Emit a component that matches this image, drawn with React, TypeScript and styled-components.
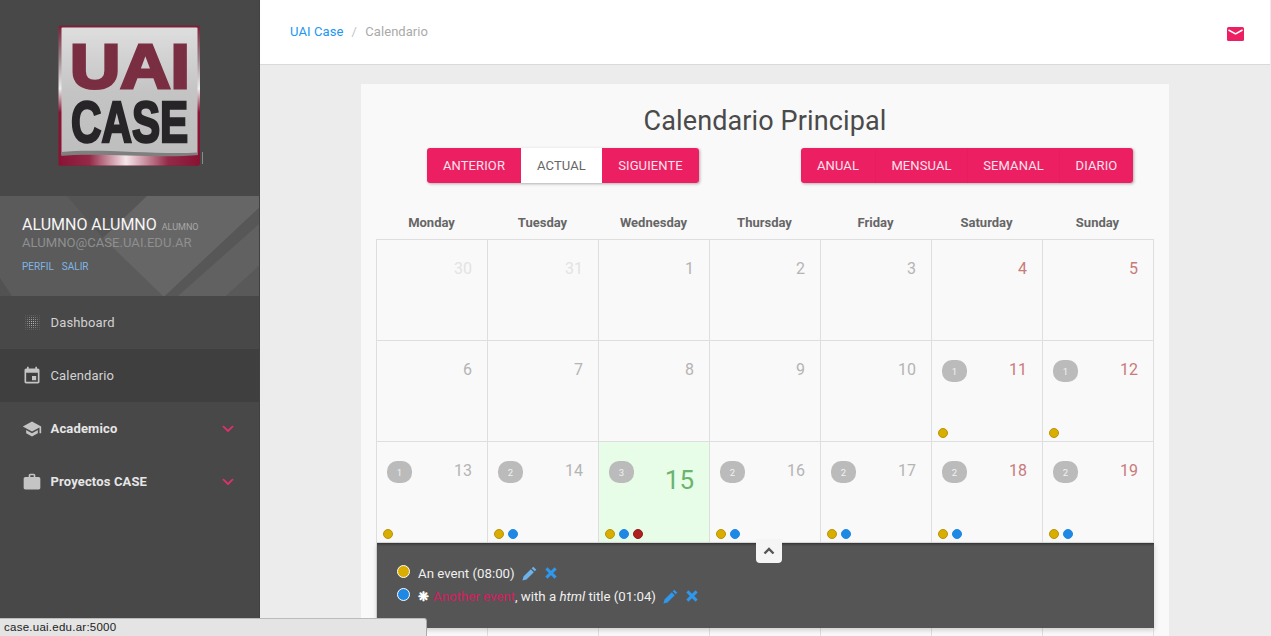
import React from "react";
import styled, { createGlobalStyle } from "styled-components";

const Global = createGlobalStyle`
  html, body { margin: 0; padding: 0; height: 100%; overflow: hidden; background: #ececec; }
  * { box-sizing: border-box; }
  body { font-family: Roboto, "Liberation Sans", sans-serif; }
`;

const Shell = styled.div`
  position: relative; display: flex; height: 636px; overflow: hidden;
`;
const Sidebar = styled.aside`
  flex: 0 0 260px; background: #484848; display: flex; flex-direction: column; border-right: 1px solid #414141;
`;
const LogoWrap = styled.div`
  height: 196px; padding: 25px 0 0 58px;
`;
const UserPanel = styled.div`
  position: relative; height: 100px; background: #5b5b5b; padding: 19px 22px 0; overflow: hidden;
`;
const PanelArt = styled.svg`
  position: absolute; inset: 0; width: 259px; height: 100px;
`;
const UserName = styled.div`
  position: relative; color: #f6f6f6; font-size: 16px; line-height: 20px; white-space: nowrap;
`;
const UserRole = styled.span`
  color: #a8a8a8; font-size: 9px; line-height: 9px; margin-left: 1px;
`;
const UserMail = styled.div`
  position: relative; color: #8f8f8f; font-size: 13.1px; line-height: 18px; margin-top: -1px;
`;
const UserLinks = styled.div`
  position: relative; display: flex; gap: 8px; margin-top: 8px; color: #7fb6e4; font-size: 10px; line-height: 14px;
`;
const NavItem = styled.div<{ $active?: boolean; $bold?: boolean }>`
  height: 53px; display: flex; align-items: center; padding: 0 24px 0 22px;
  background: ${p => (p.$active ? "#3f3f3f" : "transparent")};
  color: ${p => (p.$bold ? "#e6e6e6" : "#d2d2d2")};
  font-size: 13px; font-weight: ${p => (p.$bold ? 700 : 400)};
`;
const NavIcon = styled.span`
  width: 20px; height: 20px; margin-right: 8.5px; color: #c4c4c4; display: flex; align-items: center; justify-content: center;
  svg { display: block; }
`;
const NavLabel = styled.span`
  flex: 1; letter-spacing: .15px;
`;
const Main = styled.main`
  flex: 1; min-width: 0; display: flex; flex-direction: column; margin-right: 1px;
`;
const TopBar = styled.header`
  flex: 0 0 65px; background: #fff; border-bottom: 1px solid #d9d9d9; display: flex; align-items: flex-start;
  padding: 24px 26px 0 30px; font-size: 13px; line-height: 15px;
`;
const Crumb = styled.span`
  color: #2196f3; letter-spacing: .1px;
`;
const CrumbSep = styled.span`
  color: #c4c4c4; margin: 0 8.5px 0 8px;
`;
const CrumbCurrent = styled.span`
  color: #aaa; letter-spacing: .05px; flex: 1;
`;
const MailIcon = styled.svg`
  display: block; margin-top: 3px;
`;
const Content = styled.div`
  flex: 1; min-height: 0; padding: 19px 0 0 101px; overflow: hidden;
`;
const Card = styled.section`
  width: 808px; background: #f9f9f9; padding: 21px 15px 0;
`;
const Title = styled.h1`
  margin: 0; text-align: center; color: #4a4a4a; font-weight: 400; font-size: 27px; line-height: 32px; letter-spacing: .12px;
`;
const Toolbar = styled.div`
  display: flex; gap: 102px; padding-left: 51px; margin-top: 11px;
`;
const ButtonGroup = styled.div`
  display: flex; border-radius: 3px; overflow: hidden; box-shadow: 1px 1px 3px rgba(0,0,0,.3);
`;
const Btn = styled.div<{ $active?: boolean; $width: number; $sep?: boolean }>`
  width: ${p => p.$width}px; height: 35px; display: flex; align-items: center; justify-content: center;
  background: ${p => (p.$active ? "#fff" : "#ec1f63")};
  color: ${p => (p.$active ? "#666" : "#fbe3eb")};
  font-size: 13px; letter-spacing: .1px;
  border-left: ${p => (p.$sep ? "1px solid #e51e60" : "none")};
`;
const WeekRow = styled.div`
  display: grid; grid-template-columns: repeat(7, 111px); margin-top: 31px; height: 25px;
`;
const WeekDay = styled.div`
  text-align: center; color: #666; font-size: 13px; font-weight: 700; line-height: 18px;
`;
const Grid = styled.div`
  width: 778px; border-top: 1px solid #dedede; border-left: 1px solid #dedede;
`;
const Week = styled.div`
  display: grid; grid-template-columns: repeat(7, 111px); margin-left: -1px;
`;
const Cell = styled.div<{ $today?: boolean }>`
  height: 101px; padding: 19px 15px 2px 6px; display: flex; flex-direction: column;
  border-left: 1px solid #dedede; border-right: 1px solid #dedede; margin-right: -1px; border-bottom: 1px solid #dedede;
  background: ${p => (p.$today ? "#e8fde7" : "#f9f9f9")};
`;
const CellTop = styled.div`
  display: flex; justify-content: space-between; align-items: flex-start; padding-left: 4px; flex: 1;
`;
const Badge = styled.span`
  width: 25px; height: 22px; border-radius: 10px; background: #bbb; color: #f2f2f2; font-size: 9.5px;
  display: flex; align-items: center; justify-content: center;
`;
const DayNum = styled.span<{ $tone: string; $today?: boolean }>`
  margin-left: auto; line-height: 20px;
  font-size: ${p => (p.$today ? "26px" : "16px")};
  ${p => p.$today && "margin-top: 5px; line-height: 28px;"}
  color: ${p => p.$tone};
`;
const Dots = styled.div`
  display: flex; gap: 4px; height: 10px; margin-bottom: 1px;
`;
const Dot = styled.span<{ $color: string; $edge: string }>`
  width: 10px; height: 10px; border-radius: 50%; background: ${p => p.$color}; border: 1px solid ${p => p.$edge};
`;
const Slide = styled.div`
  position: relative; z-index: 1; height: 85px; background: #555; color: #f0f0f0; padding: 19px 20px 0;
  box-shadow: inset 0 3px 3px -2px rgba(0,0,0,.5), 0 2px 5px rgba(0,0,0,.18); font-size: 13.25px;
`;
const Collapse = styled.div`
  position: absolute; left: 379px; top: -4px; width: 26px; height: 24px; background: #f5f5f5; border-radius: 0 0 4px 4px;
  display: flex; align-items: center; justify-content: center; color: #555;
`;
const EventRow = styled.div`
  display: flex; align-items: center; height: 23px; line-height: 23px; white-space: nowrap;
`;
const EventDot = styled.span<{ $color: string }>`
  width: 13px; height: 13px; border-radius: 50%; background: ${p => p.$color}; border: 1px solid #fff; margin-right: 8px; margin-top: -4px; flex: none;
`;
const Pink = styled.span`
  color: #d81b60;
`;
const Tool = styled.svg<{ $gap: number }>`
  margin-left: ${p => p.$gap}px; flex: none; display: block; margin-top: -1px; color: #2e97ee;
`;
const Star = styled.span`
  font-size: 13px; margin-right: 4px; color: #fff; font-weight: 700;
`;
const StatusBar = styled.div`
  position: absolute; z-index: 2; left: 0; bottom: 0; width: 427px; height: 18px; background: #e4e4e4; color: #222;
  border-top: 1px solid #bbb; border-right: 1px solid #aaa; border-radius: 0 3px 0 0;
  font-size: 11.5px; line-height: 17px; padding-left: 4px; letter-spacing: .25px; font-family: "Liberation Sans", sans-serif;
`;

const Logo = () => (
  <svg width="148" height="142" viewBox="0 0 148 142">
    <defs>
      <linearGradient id="face" x1="0" y1="0" x2="0" y2="1">
        <stop offset="0" stopColor="#dedede" />
        <stop offset=".5" stopColor="#c4c4c4" />
        <stop offset="1" stopColor="#bebebe" />
      </linearGradient>
      <linearGradient id="band" x1="0" y1="0" x2="1" y2="0">
        <stop offset="0" stopColor="#8a1233" />
        <stop offset=".22" stopColor="#932a48" />
        <stop offset=".48" stopColor="#f5e6ea" />
        <stop offset=".78" stopColor="#932a48" />
        <stop offset="1" stopColor="#8a1233" />
      </linearGradient>
      <linearGradient id="edge" x1="0" y1="0" x2="0" y2="1">
        <stop offset="0" stopColor="#7a1f38" />
        <stop offset=".25" stopColor="#a08a90" />
        <stop offset=".45" stopColor="#eeeeee" />
        <stop offset=".62" stopColor="#8a1233" />
        <stop offset="1" stopColor="#8a1233" />
      </linearGradient>
    </defs>
    <rect x="0.5" y="0.5" width="141.5" height="140" rx="2" fill="url(#edge)" />
    <rect x="3.5" y="2.5" width="136" height="128" rx="1" fill="url(#face)" />
    <path d="M3.5 127 C40 123 100 130 139.5 127.5 V132 H3.5 Z" fill="#7f7f7f" />
    <path d="M2 131 C40 127 100 134 141 130 V140.5 H0.5 Z" fill="url(#band)" />
    <text transform="translate(12 62.5) scale(1.106 1)" fontFamily="Liberation Sans" fontWeight="700" fontSize="63" fill="#7a2e42" stroke="#7a2e42" strokeWidth="3">UAI</text>
    <text transform="translate(13 117) scale(.727 1)" fontFamily="Liberation Sans" fontWeight="700" fontSize="58" fill="#272527" stroke="#272527" strokeWidth="2.5">CASE</text>
    <rect x="144" y="127" width="1" height="12" fill="#8a8a8a" />
  </svg>
);

const PanelDecor = () => (
  <PanelArt viewBox="0 0 259 100">
    <polygon points="67,0 147,0 103,42" fill="#555" />
    <polygon points="147,0 259,0 259,12 165,100 163,100 103,42" fill="#666" />
    <polygon points="259,12 165,100 178,100 259,28" fill="#575757" />
    <polygon points="259,28 178,100 226,100 259,70" fill="#616161" />
    <polygon points="259,70 226,100 259,100" fill="#595959" />
    <polygon points="0,82 12,100 0,100" fill="#525252" />
  </PanelArt>
);

const DotsIcon = () => {
  const dots: React.ReactElement[] = [];
  for (let x = 0; x < 8; x++)
    for (let y = 0; y < 8; y++) {
      const d = Math.hypot(x - 3.5, y - 3.5);
      dots.push(<rect key={`${x}-${y}`} x={x * 2} y={y * 2} width="1" height="1" fill="currentColor" opacity={Math.max(0.12, 1.1 - d / 4)} />);
    }
  return <svg width="15" height="15" viewBox="0 0 15 15">{dots}</svg>;
};
const Mat = ({ d, size = 20 }: { d: string; size?: number }) => (
  <svg width={size} height={size} viewBox="0 0 24 24" fill="currentColor"><path d={d} /></svg>
);
const Chevron = () => (
  <svg width="14" height="8" viewBox="0 0 14 8" fill="none" stroke="#e0306e" strokeWidth="1.8"><path d="M2 1.2 L7 6 L12 1.2" /></svg>
);
const Pencil = ({ color }: { color: string }) => (
  <Tool $gap={7} width="15" height="15" viewBox="0 0 14 14" style={{ color }}>
    <path fill="currentColor" d="M10.6.6l2.8 2.8-1.6 1.6L9 2.2zM8.2 3l2.8 2.8-6.8 6.8L.4 13.6l1-3.8z" />
  </Tool>
);
const Cross = () => (
  <Tool $gap={8} width="12" height="12" viewBox="0 0 12 12">
    <path stroke="currentColor" strokeWidth="3" d="M1.4 1.4l9.2 9.2M10.6 1.4l-9.2 9.2" />
  </Tool>
);

const Y: [string, string] = ["#d9ae00", "#b8930a"];
const B: [string, string] = ["#1e88e5", "#1e88e5"];
const R: [string, string] = ["#ad2121", "#8f1c1c"];
type CellData = { n: number; badge?: number; dots?: [string, string][]; weekend?: boolean; muted?: boolean; today?: boolean };
const weeks: CellData[][] = [
  [{ n: 30, muted: true }, { n: 31, muted: true }, { n: 1 }, { n: 2 }, { n: 3 }, { n: 4, weekend: true }, { n: 5, weekend: true }],
  [{ n: 6 }, { n: 7 }, { n: 8 }, { n: 9 }, { n: 10 }, { n: 11, weekend: true, badge: 1, dots: [Y] }, { n: 12, weekend: true, badge: 1, dots: [Y] }],
  [
    { n: 13, badge: 1, dots: [Y] }, { n: 14, badge: 2, dots: [Y, B] }, { n: 15, badge: 3, dots: [Y, B, R], today: true },
    { n: 16, badge: 2, dots: [Y, B] }, { n: 17, badge: 2, dots: [Y, B] }, { n: 18, badge: 2, dots: [Y, B], weekend: true }, { n: 19, badge: 2, dots: [Y, B], weekend: true },
  ],
];
const lastRowCells = [0, 1, 2, 3, 4, 5, 6];

const tone = (c: CellData) => (c.today ? "#6ab46e" : c.muted ? "#e3e3e3" : c.weekend ? "#c97a7a" : "#b4b4b4");
const DayCell = ({ c }: { c: CellData }) => (
  <Cell $today={c.today}>
    <CellTop>
      {c.badge ? <Badge>{c.badge}</Badge> : null}
      <DayNum $tone={tone(c)} $today={c.today}>{c.n}</DayNum>
    </CellTop>
    <Dots>{c.dots?.map((d, i) => <Dot key={i} $color={d[0]} $edge={d[1]} />)}</Dots>
  </Cell>
);

export default function App() {
  return (
    <Shell>
      <Global />
      <Sidebar>
        <LogoWrap><Logo /></LogoWrap>
        <UserPanel>
          <PanelDecor />
          <UserName>ALUMNO ALUMNO <UserRole>ALUMNO</UserRole></UserName>
          <UserMail>ALUMNO@CASE.UAI.EDU.AR</UserMail>
          <UserLinks><span>PERFIL</span><span>SALIR</span></UserLinks>
        </UserPanel>
        <NavItem><NavIcon><DotsIcon /></NavIcon><NavLabel>Dashboard</NavLabel></NavItem>
        <NavItem $active><NavIcon><Mat d="M17 12h-5v5h5v-5zM16 1v2H8V1H6v2H5c-1.11 0-1.99.9-1.99 2L3 19c0 1.1.89 2 2 2h14c1.1 0 2-.9 2-2V5c0-1.1-.9-2-2-2h-1V1h-2zm3 18H5V8h14v11z" /></NavIcon><NavLabel>Calendario</NavLabel></NavItem>
        <NavItem $bold><NavIcon><Mat d="M5 13.18v4L12 21l7-3.82v-4L12 17l-7-3.82zM12 3L1 9l11 6 9-4.91V17h2V9L12 3z" /></NavIcon><NavLabel>Academico</NavLabel><Chevron /></NavItem>
        <NavItem $bold><NavIcon><Mat d="M20 6h-4V4c0-1.11-.89-2-2-2h-4c-1.11 0-2 .89-2 2v2H4c-1.11 0-1.99.89-1.99 2L2 19c0 1.11.89 2 2 2h16c1.11 0 2-.89 2-2V8c0-1.11-.89-2-2-2zm-6 0h-4V4h4v2z" /></NavIcon><NavLabel>Proyectos CASE</NavLabel><Chevron /></NavItem>
      </Sidebar>
      <Main>
        <TopBar>
          <Crumb>UAI Case</Crumb><CrumbSep>/</CrumbSep><CrumbCurrent>Calendario</CrumbCurrent>
          <MailIcon width="17" height="14" viewBox="0 0 17 14">
            <rect width="17" height="14" rx="1.5" fill="#ec1f63" />
            <path d="M1.5 3 L8.5 7 L15.5 3" fill="none" stroke="#fff" strokeWidth="1.5" />
          </MailIcon>
        </TopBar>
        <Content>
          <Card>
            <Title>Calendario Principal</Title>
            <Toolbar>
              <ButtonGroup>
                <Btn $width={94}>ANTERIOR</Btn>
                <Btn $width={81} $active>ACTUAL</Btn>
                <Btn $width={97}>SIGUIENTE</Btn>
              </ButtonGroup>
              <ButtonGroup>
                <Btn $width={74}>ANUAL</Btn>
                <Btn $width={92} $sep>MENSUAL</Btn>
                <Btn $width={92} $sep>SEMANAL</Btn>
                <Btn $width={74} $sep>DIARIO</Btn>
              </ButtonGroup>
            </Toolbar>
            <WeekRow>
              {["Monday", "Tuesday", "Wednesday", "Thursday", "Friday", "Saturday", "Sunday"].map(d => <WeekDay key={d}>{d}</WeekDay>)}
            </WeekRow>
            <Grid>
              {weeks.map((w, i) => <Week key={i}>{w.map(c => <DayCell key={c.n} c={c} />)}</Week>)}
              <Slide>
                <Collapse>
                  <svg width="12" height="8" viewBox="0 0 12 8" fill="none" stroke="currentColor" strokeWidth="2.4"><path d="M1.5 6.5 L6 2 L10.5 6.5" /></svg>
                </Collapse>
                <EventRow>
                  <EventDot $color="#d9ae00" />An event (08:00)
                  <Pencil color="#6cb2ec" /><Cross />
                </EventRow>
                <EventRow>
                  <EventDot $color="#1e88e5" /><Star>❋</Star><Pink>Another event</Pink>, with a&nbsp;<i>html</i>&nbsp;title (01:04)
                  <Pencil color="#2e97ee" /><Cross />
                </EventRow>
              </Slide>
              <Week>{lastRowCells.map(i => <Cell key={i} />)}</Week>
            </Grid>
          </Card>
        </Content>
      </Main>
      <StatusBar>case.uai.edu.ar:5000</StatusBar>
    </Shell>
  );
}
